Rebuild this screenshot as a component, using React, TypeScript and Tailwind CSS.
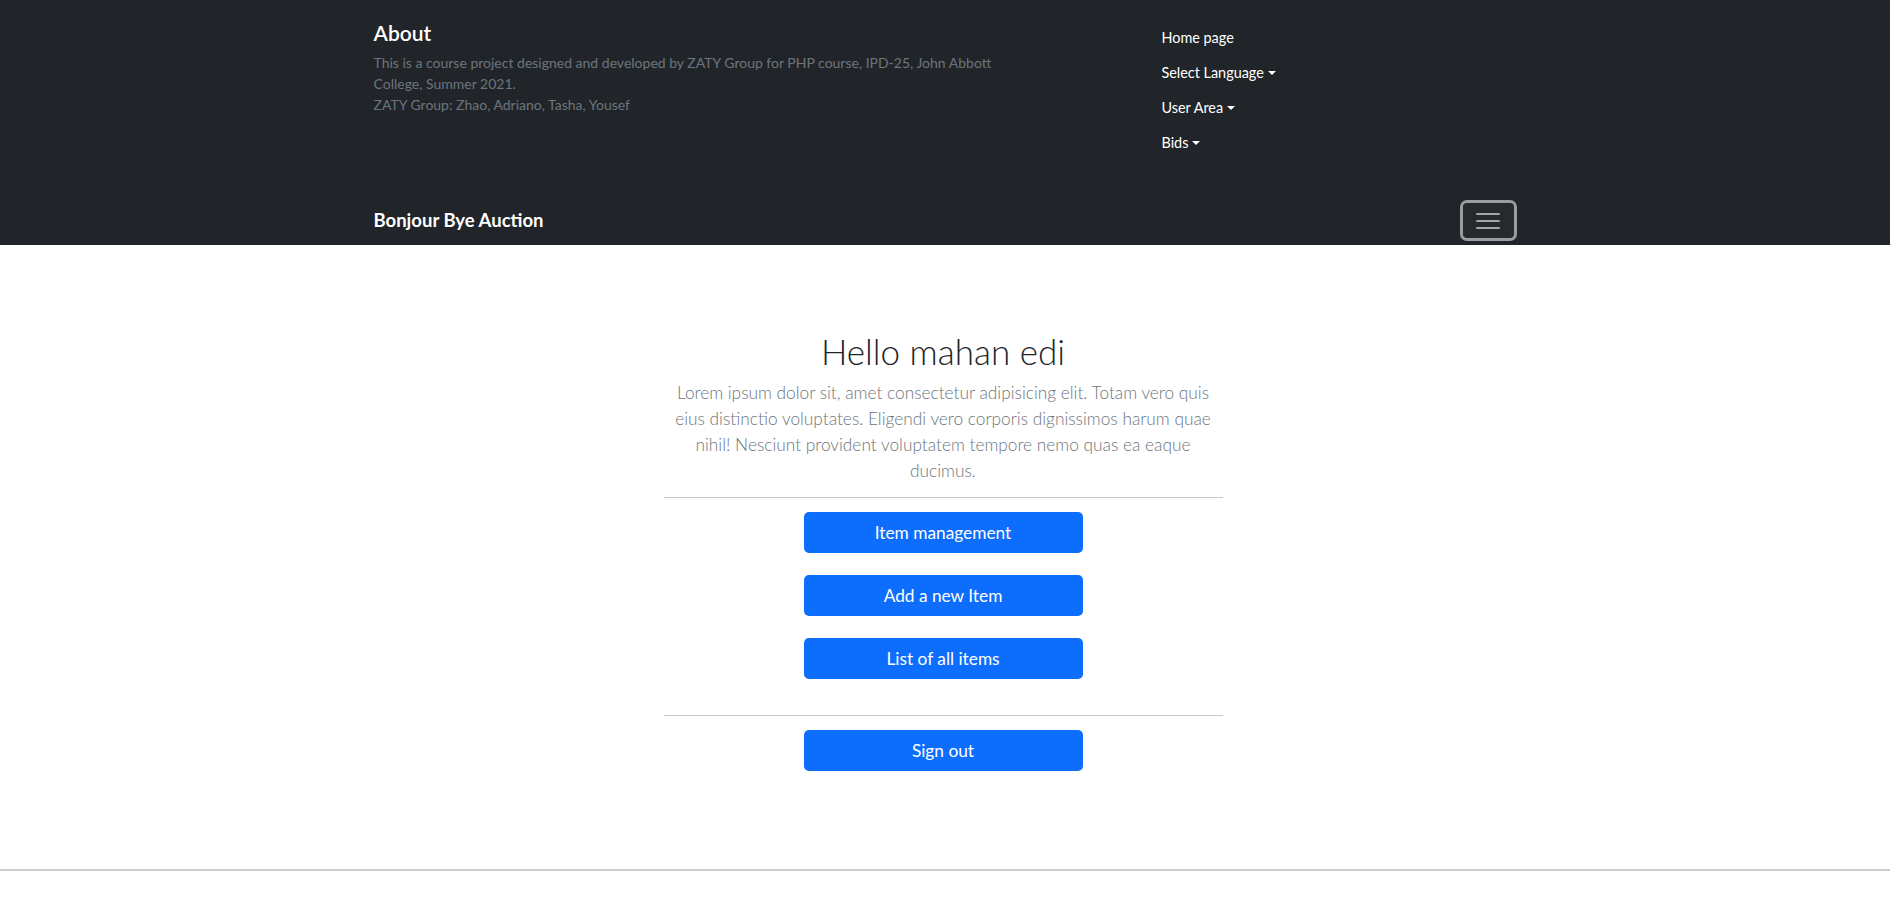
import React from "react";

function Caret() {
  return (
    <span className="ml-[4px] inline-block h-0 w-0 border-x-[4px] border-t-[4px] border-x-transparent border-t-white align-[2px]" />
  );
}

const navItems = [
  { label: "Home page", caret: false },
  { label: "Select Language", caret: true },
  { label: "User Area", caret: true },
  { label: "Bids", caret: true },
];

const buttons = ["Item management", "Add a new Item", "List of all items"];

export default function App() {
  return (
    <div className="min-h-[915px] bg-white font-['Lato','Open_Sans',sans-serif] text-[#212529]">
      <header className="bg-[#212529]">
        <div className="mx-auto flex h-[196px] w-[1143px]">
          <div className="w-[788px] pt-[20px]">
            <h4 className="text-[21px] leading-[25px] font-semibold text-white">About</h4>
            <p className="mt-[7px] w-[650px] text-[14px] leading-[21px] text-[#6c757d]">
              This is a course project designed and developed by ZATY Group for PHP course, IPD-25, John Abbott College, Summer 2021.
              <br />
              ZATY Group: Zhao, Adriano, Tasha, Yousef
            </p>
          </div>
          <ul className="pt-[20px]">
            {navItems.map((n) => (
              <li key={n.label} className="flex h-[35px] items-center text-[14.4px] text-white">
                <span>{n.label}</span>
                {n.caret && <Caret />}
              </li>
            ))}
          </ul>
        </div>
        <div className="mx-auto flex h-[49px] w-[1143px] items-center justify-between">
          <strong className="text-[18.5px] font-bold text-white">Bonjour Bye Auction</strong>
          <div className="flex h-[41px] w-[57px] items-center justify-center rounded-[7px] border-[3px] border-[#9a9c9f] bg-[#26292d]">
            <svg width="24" height="18" viewBox="0 0 24 18">
              <path d="M1 2h22M1 9h22M1 16h22" stroke="#a3a5a8" strokeWidth="2" strokeLinecap="round" />
            </svg>
          </div>
        </div>
      </header>

      <main className="flex flex-col items-center">
        <div className="mr-[4px] flex w-[559px] flex-col items-center">
          <h1 className="mt-[85px] text-[35px] leading-[42px] font-light text-[#212529]">Hello mahan edi</h1>
          <p className="mt-[8px] w-[538px] text-center text-[17.3px] leading-[26px] font-light text-[#6c757d]">
            Lorem ipsum dolor sit, amet consectetur adipisicing elit. Totam vero quis eius distinctio voluptates. Eligendi vero corporis dignissimos harum quae nihil! Nesciunt provident voluptatem tempore nemo quas ea eaque ducimus.
          </p>
          <hr className="mt-[13px] w-full border-t border-[#c8c8c8]" />
          <div className="mt-[14px] flex flex-col gap-[22px]">
            {buttons.map((b) => (
              <button
                key={b}
                className="h-[41px] w-[279px] rounded-[5px] bg-[#0d6efd] text-[17.3px] text-white"
              >
                {b}
              </button>
            ))}
          </div>
          <hr className="mt-[36px] w-full border-t border-[#c8c8c8]" />
          <button className="mt-[14px] h-[41px] w-[279px] rounded-[5px] bg-[#0d6efd] text-[17.3px] text-white">
            Sign out
          </button>
        </div>
        <hr className="mt-[98px] w-full border-t-2 border-[#cdcdcd]" />
      </main>
    </div>
  );
}
